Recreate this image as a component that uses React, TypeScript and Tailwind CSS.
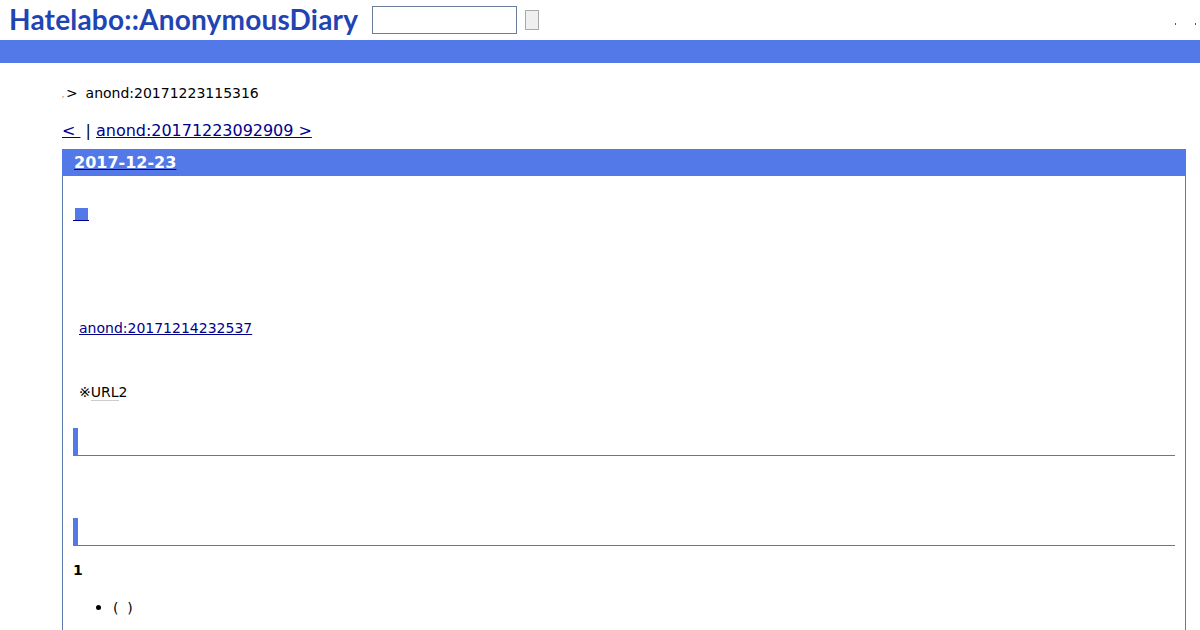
export default function App() {
  return (
    <div className="h-[630px] overflow-hidden bg-white text-black font-['DejaVu_Sans',sans-serif] text-[14px]">
      {/* banner */}
      <header className="h-10 flex items-center pl-[9px] relative">
        <h1 className="w-[349px] shrink-0 -mt-[2px] text-[28px] leading-10 font-bold font-['Lato',sans-serif] text-[#1f44b4] tracking-[0.2px] whitespace-nowrap">
          Hatelabo::AnonymousDiary
        </h1>
        <input className="ml-[14px] w-[145px] h-7 border border-[#6b7f9c] bg-white" />
        <button className="ml-2 w-[14px] h-5 border border-[#a9a9a9] bg-[#efefef]" />
        <span className="absolute left-[1175px] top-[23px] w-px h-[2px] bg-[#555]" />
        <span className="absolute left-[1195px] top-[23px] w-px h-[2px] bg-[#555]" />
      </header>
      <div className="h-[23px] bg-[#5279e7]" />

      <main className="pl-[62px] pr-[14px]">
        <p className="h-[60px] pt-[21px] leading-[18px] flex whitespace-pre">
          <span className="text-[6px] leading-[22px] mr-[2px]">,</span>
          <span>&gt;  </span>
          <span className="-ml-[1px]">anond:20171223115316</span>
        </p>
        <div className="h-[26px] -mt-[2px] mb-[2px] text-[16px] leading-[19px] whitespace-pre">
          <a href="#" className="underline text-[#00008b]">&lt; </a>
          <span> | </span>
          <a href="#" className="underline text-[#00008b] tracking-[-0.03px]">anond:20171223092909 &gt;</a>
        </div>

        <section className="border border-[#5a7aa8] h-[600px]">
          <h2 className="h-[27px] -mt-px -mx-px bg-[#5279e7] pl-3 text-[16px] font-bold leading-[27px] text-white">
            <a href="#" className="underline decoration-[#00008b]">2017-12-23</a>
          </h2>
          <div className="px-[10px]">
            <div className="h-[29px] mt-[23px] flex items-center">
              <a href="#" className="border-b border-[#00008b] pl-[2px] pr-px h-[13px] mt-[1px]">
                <span className="block w-[13px] h-[12px] bg-[#5279e7]" />
              </a>
            </div>
            <p className="mt-[91px] pl-[6px] leading-[18px]">
              <a href="#" className="underline text-[#00008b]">anond:20171214232537</a>
            </p>
            <p className="mt-[46px] pl-[6px] leading-[18px]">
              <span>※</span>
              <span className="border-b border-[#ccc]">URL</span>
              <span>2</span>
            </p>
            <h3 className="mt-[27px] h-7 border-l-[5px] border-l-[#5279e7] border-b border-b-[#5a7aa8]" />
            <h3 className="mt-[62px] h-7 border-l-[5px] border-l-[#5279e7] border-b border-b-[#5a7aa8]" />
            <p className="mt-[15px] font-bold leading-[18px]">1</p>
            <ul className="mt-5 pl-[40px] list-disc leading-[18px] marker:text-[16px]">
              <li className="whitespace-pre">(  )</li>
              <li className="mt-2 text-white marker:text-[#f4f4f4]"> </li>
            </ul>
          </div>
        </section>
      </main>
    </div>
  );
}
